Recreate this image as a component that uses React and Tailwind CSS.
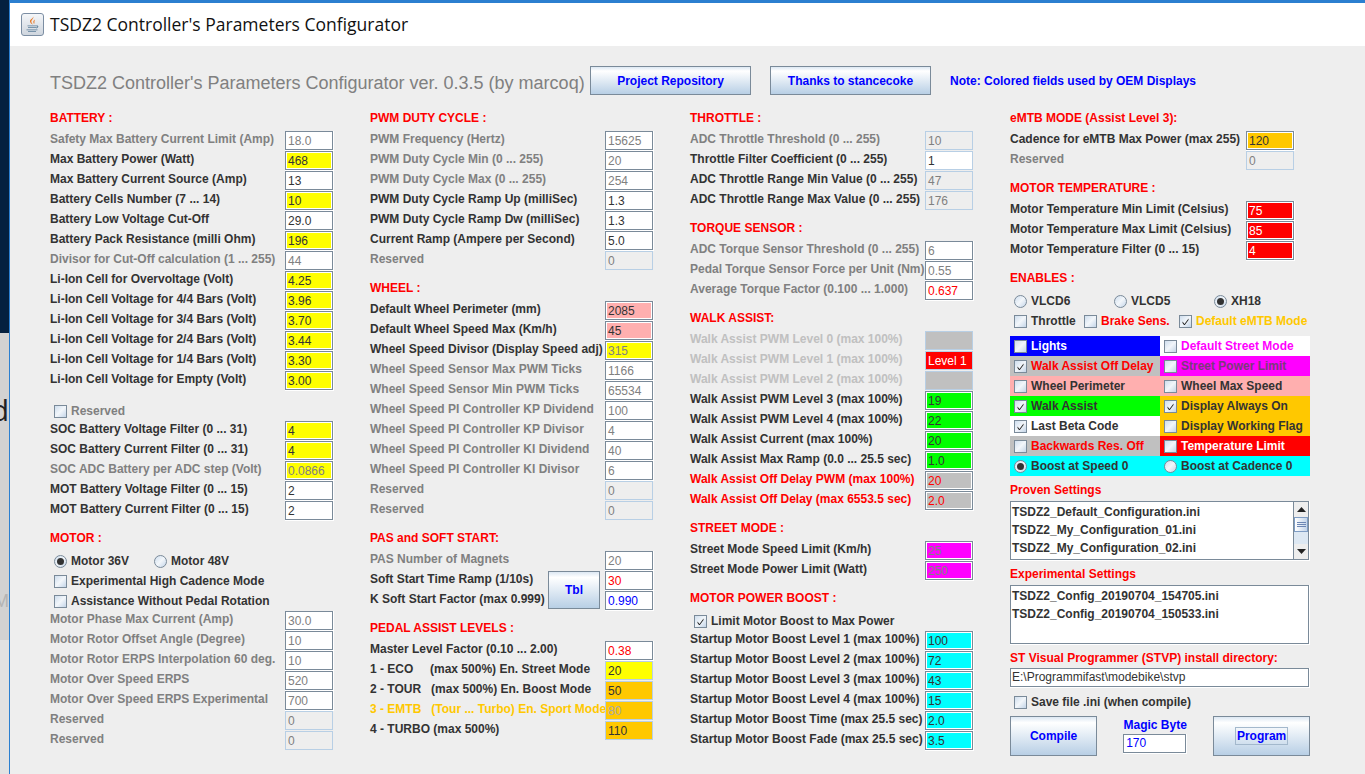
import React from 'react';

// field looks, written out so the classes are seen by tailwind
const N = 'bg-white text-[#333333]';
const G = 'bg-white text-[#808080]';
const RT = 'bg-white text-[#ff0000]';
const BT = 'bg-white text-[#0000ff]';
const Y = 'bg-[#ffff00] text-[#333333]';
const YG = 'bg-[#ffff00] text-[#808080]';
const O = 'bg-[#ffc800] text-[#333333]';
const OG = 'bg-[#ffc800] text-[#a8a8a8]';
const P = 'bg-[#ffafaf] text-[#333333]';
const LG = 'bg-[#00ff00] text-[#333333]';
const GR = 'bg-[#c0c0c0] text-[#ff0000]';
const GB = 'bg-[#c0c0c0] text-[#333333]';
const RD = 'bg-[#ff0000] text-white';
const MG = 'bg-[#ff00ff] text-[#808080]';
const CY = 'bg-[#00ffff] text-[#333333]';
const DIS = 'bg-[#eeeeee] text-[#808080]';

const DARK = 'text-[#333333]';
const DIM = 'text-[#808080]';
const PALE = 'text-[#c0c0c0]';
const RED = 'text-[#ff0000]';
const ORG = 'text-[#ffc800]';

const Field = ({ v, look = N, off }) => (
  <div className={`w-[49px] h-5 shrink-0 border-r border-b ${off ? 'border-[#eeeeee]' : 'border-white'}`}>
    <div className={`h-full border ${off ? 'border-[#b8cfe5]' : 'border-[#7a8a99]'}`}>
      <div className={`h-full border pl-px text-xs leading-[17px] font-normal ${off ? 'border-transparent' : 'border-white'} ${look}`}>{v}</div>
    </div>
  </div>
);

const Row = ({ label, v, look, off, color = DARK, wide }) => (
  <div className="flex h-5">
    <div className={`${wide ? 'w-[236px]' : 'w-[235px]'} whitespace-pre text-xs font-bold leading-4 ${color}`}>{label}</div>
    <Field v={v} look={look} off={off} />
  </div>
);

const Heading = ({ children, className = 'h-5' }) => (
  <div className={`${className} text-xs font-bold leading-[14px] text-[#ff0000]`}>{children}</div>
);

const CheckBox = ({ on }) => (
  <span className="flex items-center justify-center w-[13px] h-[13px] shrink-0 border border-[#7a8a99] bg-linear-to-br from-[#cfdeee] via-[#f2f6fa] to-[#c4d5e8]">
    {on && (
      <svg width="9" height="9" viewBox="0 0 9 9">
        <path d="M1.5 4.5 L3.5 7 L7.5 1.5 L7.5 3 L3.8 8 L3 8 L1.5 6 Z" fill="#222222" />
      </svg>
    )}
  </span>
);

const Radio = ({ on }) => (
  <span className="flex items-center justify-center w-[13px] h-[13px] shrink-0 rounded-full border border-[#7a8a99] bg-linear-to-br from-[#cfdeee] via-[#f2f6fa] to-[#c4d5e8]">
    {on && <span className="w-[7px] h-[7px] rounded-full bg-[#333333]" />}
  </span>
);

const Opt = ({ label, on, radio, color = DARK, className = '' }) => (
  <label className={`flex items-center gap-1 text-xs font-bold whitespace-nowrap ${color} ${className}`}>
    {radio ? <Radio on={on} /> : <CheckBox on={on} />}
    {label}
  </label>
);

const Btn = ({ children, className = '', focus }) => (
  <button className={`flex items-center justify-center border border-[#7a8a99] bg-linear-to-b from-[#dde8f3] via-white via-[15%] to-[#b8cfe5] text-xs font-bold text-[#0000ff] ${className}`}>
    {focus ? <span className="border border-[#a3b8cc] px-px">{children}</span> : children}
  </button>
);

const Section = ({ title, rows, wide, className = '' }) => (
  <div className={`mb-[10px] ${className}`}>
    <Heading>{title}</Heading>
    {rows.map((r, i) => (
      <Row key={i} label={r[0]} v={r[1]} look={r[2]} off={r[3]} color={r[4]} wide={wide} />
    ))}
  </div>
);

const battery = [
  ['Safety Max Battery Current Limit (Amp)', '18.0', G, false, DIM],
  ['Max Battery Power (Watt)', '468', Y],
  ['Max Battery Current Source (Amp)', '13', N],
  ['Battery Cells Number (7 ... 14)', '10', Y],
  ['Battery Low Voltage Cut-Off', '29.0', N],
  ['Battery Pack Resistance (milli Ohm)', '196', Y],
  ['Divisor for Cut-Off calculation (1 ... 255)', '44', G, false, DIM],
  ['Li-Ion Cell for Overvoltage (Volt)', '4.25', Y],
  ['Li-Ion Cell Voltage for 4/4 Bars (Volt)', '3.96', Y],
  ['Li-Ion Cell Voltage for 3/4 Bars (Volt)', '3.70', Y],
  ['Li-Ion Cell Voltage for 2/4 Bars (Volt)', '3.44', Y],
  ['Li-Ion Cell Voltage for 1/4 Bars (Volt)', '3.30', Y],
  ['Li-Ion Cell Voltage for Empty (Volt)', '3.00', Y],
];
const battery2 = [
  ['SOC Battery Voltage Filter (0 ... 31)', '4', Y],
  ['SOC Battery Current Filter (0 ... 31)', '4', Y],
  ['SOC ADC Battery per ADC step (Volt)', '0.0866', YG, false, DIM],
  ['MOT Battery Voltage Filter (0 ... 15)', '2', N],
  ['MOT Battery Current Filter (0 ... 15)', '2', N],
];
const motor = [
  ['Motor Phase Max Current (Amp)', '30.0', G, false, DIM],
  ['Motor Rotor Offset Angle (Degree)', '10', G, false, DIM],
  ['Motor Rotor ERPS Interpolation 60 deg.', '10', G, false, DIM],
  ['Motor Over Speed ERPS', '520', G, false, DIM],
  ['Motor Over Speed ERPS Experimental', '700', G, false, DIM],
  ['Reserved', '0', DIS, true, DIM],
  ['Reserved', '0', DIS, true, DIM],
];
const pwm = [
  ['PWM Frequency (Hertz)', '15625', G, false, DIM],
  ['PWM Duty Cycle Min (0 ... 255)', '20', G, false, DIM],
  ['PWM Duty Cycle Max (0 ... 255)', '254', G, false, DIM],
  ['PWM Duty Cycle Ramp Up (milliSec)', '1.3', N],
  ['PWM Duty Cycle Ramp Dw (milliSec)', '1.3', N],
  ['Current Ramp (Ampere per Second)', '5.0', N],
  ['Reserved', '0', DIS, true, DIM],
];
const wheel = [
  ['Default Wheel Perimeter (mm)', '2085', P],
  ['Default Wheel Speed Max (Km/h)', '45', P],
  ['Wheel Speed Divisor (Display Speed adj)', '315', YG],
  ['Wheel Speed Sensor Max PWM Ticks', '1166', G, false, DIM],
  ['Wheel Speed Sensor Min PWM Ticks', '65534', G, false, DIM],
  ['Wheel Speed PI Controller KP Dividend', '100', G, false, DIM],
  ['Wheel Speed PI Controller KP Divisor', '4', G, false, DIM],
  ['Wheel Speed PI Controller KI Dividend', '40', G, false, DIM],
  ['Wheel Speed PI Controller KI Divisor', '6', G, false, DIM],
  ['Reserved', '0', DIS, true, DIM],
  ['Reserved', '0', DIS, true, DIM],
];
const levels = [
  ['Master Level Factor (0.10 ... 2.00)', '0.38', RT],
  ['1 - ECO     (max 500%) En. Street Mode', '20', Y, true],
  ['2 - TOUR   (max 500%) En. Boost Mode', '50', O, true],
  ['3 - EMTB   (Tour ... Turbo) En. Sport Mode', '80', OG, true, ORG],
  ['4 - TURBO (max 500%)', '110', O, true],
];
const throttle = [
  ['ADC Throttle Threshold (0 ... 255)', '10', DIS, true, DIM],
  ['Throttle Filter Coefficient (0 ... 255)', '1', N, true],
  ['ADC Throttle Range Min Value (0 ... 255)', '47', DIS, true],
  ['ADC Throttle Range Max Value (0 ... 255)', '176', DIS, true],
];
const torque = [
  ['ADC Torque Sensor Threshold (0 ... 255)', '6', G, false, DIM],
  ['Pedal Torque Sensor Force per Unit (Nm)', '0.55', G, false, DIM],
  ['Average Torque Factor (0.100 ... 1.000)', '0.637', RT, false, DIM],
];
const walk = [
  ['Walk Assist PWM Level 0 (max 100%)', '', GB, true, PALE],
  ['Walk Assist PWM Level 1 (max 100%)', ' Level 1', RD, true, PALE],
  ['Walk Assist PWM Level 2 (max 100%)', '', GB, true, PALE],
  ['Walk Assist PWM Level 3 (max 100%)', '19', LG],
  ['Walk Assist PWM Level 4 (max 100%)', '22', LG],
  ['Walk Assist Current (max 100%)', '20', LG],
  ['Walk Assist Max Ramp (0.0 ... 25.5 sec)', '1.0', LG],
  ['Walk Assist Off Delay PWM (max 100%)', '20', GR, false, RED],
  ['Walk Assist Off Delay (max 6553.5 sec)', '2.0', GR, false, RED],
];
const street = [
  ['Street Mode Speed Limit (Km/h)', '25', MG],
  ['Street Mode Power Limit (Watt)', '250', MG],
];
const boost = [
  ['Startup Motor Boost Level 1 (max 100%)', '100', CY],
  ['Startup Motor Boost Level 2 (max 100%)', '72', CY],
  ['Startup Motor Boost Level 3 (max 100%)', '43', CY],
  ['Startup Motor Boost Level 4 (max 100%)', '15', CY],
  ['Startup Motor Boost Time (max 25.5 sec)', '2.0', CY],
  ['Startup Motor Boost Fade (max 25.5 sec)', '3.5', CY],
];
const emtb = [
  ['Cadence for eMTB Max Power (max 255)', '120', O],
  ['Reserved', '0', DIS, true, DIM],
];
const temp = [
  ['Motor Temperature Min Limit (Celsius)', '75', RD],
  ['Motor Temperature Max Limit (Celsius)', '85', RD],
  ['Motor Temperature Filter (0 ... 15)', '4', RD],
];
const enables = [
  ['Lights', false, 'bg-[#0000ff]', 'text-white'],
  ['Default Street Mode', false, 'bg-white', 'text-[#ff00ff]'],
  ['Walk Assist Off Delay', true, 'bg-[#c0c0c0]', 'text-[#ff0000]'],
  ['Street Power Limit', false, 'bg-[#ff00ff]', 'text-[#7a3a7a]'],
  ['Wheel Perimeter', false, 'bg-[#ffafaf]', DARK],
  ['Wheel Max Speed', false, 'bg-[#ffafaf]', DARK],
  ['Walk Assist', true, 'bg-[#00ff00]', DARK],
  ['Display Always On', true, 'bg-[#ffc800]', DARK],
  ['Last Beta Code', true, 'bg-white', DARK],
  ['Display Working Flag', false, 'bg-[#ffc800]', DARK],
  ['Backwards Res. Off', false, 'bg-[#c0c0c0]', 'text-[#ff0000]'],
  ['Temperature Limit', false, 'bg-[#ff0000]', 'text-white'],
];

const ListBox = ({ items, scroll }) => (
  <div className="flex h-[60px] w-[300px] border-r border-b border-white">
    <div className="flex flex-1 border border-[#7a8a99] bg-white">
      <div className="flex-1 pt-px pl-px text-xs font-bold leading-[18px] text-[#333333]">
        {items.map((t) => <div key={t}>{t}</div>)}
      </div>
      {scroll && (
        <div className="flex flex-col w-[15px] border-l border-[#7a8a99] bg-[#eeeeee]">
          <div className="flex items-center justify-center h-[15px] bg-[#eeeeee]">
            <svg width="9" height="5" viewBox="0 0 9 5"><path d="M4.5 0 L9 5 L0 5 Z" fill="#222222" /></svg>
          </div>
          <div className="flex flex-col items-center justify-center gap-px h-[15px] border border-[#7f9dc4] bg-linear-to-r from-[#ffffff] to-[#c4d5ea]">
            <span className="h-px w-[9px] bg-[#6d87b5]" />
            <span className="h-px w-[9px] bg-[#6d87b5]" />
            <span className="h-px w-[9px] bg-[#6d87b5]" />
          </div>
          <div className="flex-1 bg-[#dde8f3]" />
          <div className="flex items-center justify-center h-[15px] bg-[#eeeeee]">
            <svg width="9" height="5" viewBox="0 0 9 5"><path d="M0 0 L9 0 L4.5 5 Z" fill="#222222" /></svg>
          </div>
        </div>
      )}
    </div>
  </div>
);

const JavaIcon = () => (
  <div className="flex items-center justify-center w-[23px] h-[23px] rounded-[3px] border border-[#7c8ea3] bg-linear-to-b from-[#f4f6f9] to-[#cfd6de]">
    <svg width="15" height="17" viewBox="0 0 15 17">
      <path d="M8 0.5 C9.5 2.5 5.5 4 6.5 6.5 C7 7.8 8 8.5 8 8.5 C6.5 8 4.8 6.5 5 5 C5.3 3 8.5 2.5 8 0.5 Z" fill="#e8731c" />
      <path d="M10 3.5 C8.5 4.5 8 5.5 8.6 7 C8.8 7.6 9 8 9 8 C10 7 8.8 5.5 10 3.5 Z" fill="#e8731c" />
      <path d="M2.5 9.5 H11.5 V10.3 H2.5 Z M3 11.2 H11 V12 H3 Z M11.5 9.5 C14 9 14 12 11 12.3 L11 11.6 C12.8 11.4 12.8 10.2 11.5 10.2 Z" fill="#5a7d99" />
      <path d="M1.5 13.4 H12.5 V14.2 H1.5 Z M3 15.2 H11 V16 H3 Z" fill="#5a7d99" />
    </svg>
  </div>
);

export default function App() {
  return (
    <div className="flex h-screen w-[1365px] overflow-hidden bg-[#eeeeee] [font-family:'Liberation_Sans',Arial,sans-serif]">
      {/* desktop behind the window */}
      <div className="flex flex-col w-[9px] shrink-0 overflow-hidden">
        <div className="h-[333px] bg-[#04203f]" />
        <div className="flex flex-col items-end h-[307px] bg-[#d2d2d2]">
          <span className="mt-[60px] text-[30px] leading-[34px] text-[#222222] [font-family:'Open_Sans',sans-serif]">d</span>
          <span className="mt-[160px] text-lg text-[#b4b4b4]">M</span>
        </div>
        <div className="flex-1 bg-[#e2e2e2]" />
      </div>

      <div className="flex flex-col flex-1 border-l border-[#2b7fd0]">
        <div className="h-[3px] bg-[#2b7fd0]" />
        <div className="flex items-center gap-[6px] h-[43px] pl-[11px] bg-white">
          <JavaIcon />
          <span className="text-[17.5px] text-[#111111] [font-family:'Open_Sans',sans-serif]">TSDZ2 Controller's Parameters Configurator</span>
        </div>

        <div className="pl-10">
          <div className="flex items-center h-[29px] mt-5 mb-4">
            <span className="w-[540px] -mb-1 text-lg text-[#808080] whitespace-nowrap">TSDZ2 Controller's Parameters Configurator ver. 0.3.5 (by marcoq)</span>
            <Btn className="w-[161px] h-[29px]">Project Repository</Btn>
            <Btn className="w-[161px] h-[29px] ml-[19px]">Thanks to stancecoke</Btn>
            <span className="ml-[19px] text-xs font-bold text-[#0000ff]">Note: Colored fields used by OEM Displays</span>
          </div>

          <div className="grid grid-cols-[320px_320px_320px_320px]">
            {/* column 1 */}
            <div>
              <Section title="BATTERY :" rows={battery} className="mb-0" />
              <div className="flex items-center h-5 pl-1">
                <Opt label="Reserved" color={DIM} />
              </div>
              <Section title="" rows={battery2} className="-mt-5" />
              <Heading>MOTOR :</Heading>
              <div className="flex items-center h-5 pl-1">
                <Opt label="Motor 36V" on radio className="w-[100px]" />
                <Opt label="Motor 48V" radio />
              </div>
              <div className="flex items-center h-5 pl-1"><Opt label="Experimental High Cadence Mode" /></div>
              <div className="flex items-center h-5 pl-1"><Opt label="Assistance Without Pedal Rotation" /></div>
              {motor.map((r, i) => (
                <Row key={i} label={r[0]} v={r[1]} look={r[2]} off={r[3]} color={r[4]} />
              ))}
            </div>

            {/* column 2 */}
            <div>
              <Section title="PWM DUTY CYCLE :" rows={pwm} />
              <Section title="WHEEL :" rows={wheel} />
              <div className="mb-[10px]">
                <Heading>PAS and SOFT START:</Heading>
                <Row label="PAS Number of Magnets" v="20" look={G} color={DIM} />
                <div className="flex">
                  <div className="w-[178px] text-xs font-bold text-[#333333] whitespace-nowrap">
                    <div className="h-5 leading-4">Soft Start Time Ramp (1/10s)</div>
                    <div className="h-5 leading-4">K Soft Start Factor (max 0.999)</div>
                  </div>
                  <Btn className="w-[52px] h-[38px] mr-[5px]">Tbl</Btn>
                  <div>
                    <Field v="30" look={RT} />
                    <Field v="0.990" look={BT} />
                  </div>
                </div>
              </div>
              <Section title="PEDAL ASSIST LEVELS :" rows={levels} />
            </div>

            {/* column 3 */}
            <div>
              <Section title="THROTTLE :" rows={throttle} />
              <Section title="TORQUE SENSOR :" rows={torque} />
              <Section title="WALK ASSIST:" rows={walk} />
              <Section title="STREET MODE :" rows={street} />
              <Heading>MOTOR POWER BOOST :</Heading>
              <div className="flex items-center h-5 pl-1"><Opt label="Limit Motor Boost to Max Power" on /></div>
              {boost.map((r, i) => (
                <Row key={i} label={r[0]} v={r[1]} look={r[2]} />
              ))}
            </div>

            {/* column 4 */}
            <div>
              <Section title="eMTB MODE (Assist Level 3):" rows={emtb} wide />
              <Section title="MOTOR TEMPERATURE :" rows={temp} wide />
              <Heading>ENABLES :</Heading>
              <div className="flex items-center h-5 pl-1">
                <Opt label="VLCD6" radio className="w-[100px]" />
                <Opt label="VLCD5" radio className="w-[100px]" />
                <Opt label="XH18" radio on />
              </div>
              <div className="flex items-center h-5 pl-1">
                <Opt label="Throttle" className="w-[70px]" />
                <Opt label="Brake Sens." color={RED} className="w-[95px]" />
                <Opt label="Default eMTB Mode" on color={ORG} />
              </div>
              <div className="grid grid-cols-2 w-[300px] mt-[5px]">
                {enables.map(([label, on, bg, color]) => (
                  <div key={label} className={`flex items-center h-5 pl-1 ${bg}`}>
                    <Opt label={label} on={on} color={color} />
                  </div>
                ))}
                <div className="flex items-center h-5 pl-1 bg-[#00ffff]"><Opt label="Boost at Speed 0" radio on /></div>
                <div className="flex items-center h-5 pl-1 bg-[#00ffff]"><Opt label="Boost at Cadence 0" radio /></div>
              </div>
              <Heading className="h-[18px] mt-[7px]">Proven Settings</Heading>
              <ListBox scroll items={['TSDZ2_Default_Configuration.ini', 'TSDZ2_My_Configuration_01.ini', 'TSDZ2_My_Configuration_02.ini']} />
              <Heading className="h-[18px] mt-[6px]">Experimental Settings</Heading>
              <ListBox items={['TSDZ2_Config_20190704_154705.ini', 'TSDZ2_Config_20190704_150533.ini']} />
              <Heading className="h-[17px] mt-[6px]">ST Visual Programmer (STVP) install directory:</Heading>
              <div className="w-[300px] h-5 border-r border-b border-white">
                <div className="h-full border border-[#7a8a99] bg-white pl-px text-xs leading-[17px] text-[#333333]">E:\Programmifast\modebike\stvp</div>
              </div>
              <div className="flex items-center h-5 mt-1 pl-1"><Opt label="Save file .ini (when compile)" /></div>
              <div className="flex w-[300px] mt-1">
                <Btn className="w-[90px] h-10">Compile</Btn>
                <div className="flex flex-col items-center w-[120px]">
                  <span className="text-xs font-bold leading-[18px] text-[#0000ff]">Magic Byte</span>
                  <div className="w-[64px] h-5 border-r border-b border-white">
                    <div className="h-full border border-[#7a8a99] bg-white pl-[2px] text-xs leading-[17px] text-[#0000ff]">170</div>
                  </div>
                </div>
                <Btn className="w-[100px] h-10" focus>Program</Btn>
              </div>
            </div>
          </div>
        </div>
      </div>
    </div>
  );
}
